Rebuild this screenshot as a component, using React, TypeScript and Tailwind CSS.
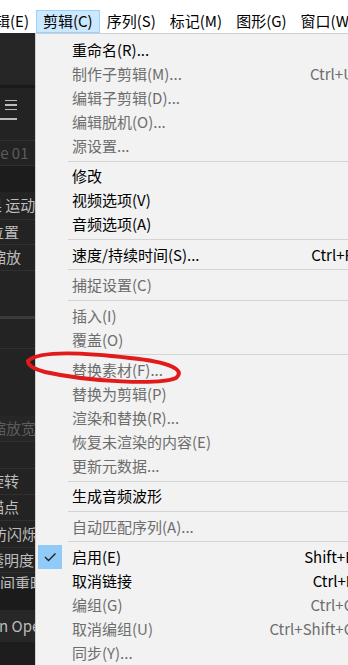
import React from 'react';

type Entry =
  | { kind: 'item'; label: string; shortcut?: string; disabled?: boolean; checked?: boolean }
  | { kind: 'sep' };

const it = (label: string, opts: { shortcut?: string; disabled?: boolean; checked?: boolean } = {}): Entry => ({
  kind: 'item',
  label,
  ...opts,
});
const sep: Entry = { kind: 'sep' };

const entries: Entry[] = [
  it('重命名(R)...'),
  it('制作子剪辑(M)...', { shortcut: 'Ctrl+U', disabled: true }),
  it('编辑子剪辑(D)...', { disabled: true }),
  it('编辑脱机(O)...', { disabled: true }),
  it('源设置...', { disabled: true }),
  sep,
  it('修改'),
  it('视频选项(V)'),
  it('音频选项(A)'),
  sep,
  it('速度/持续时间(S)...', { shortcut: 'Ctrl+R' }),
  sep,
  it('捕捉设置(C)', { disabled: true }),
  sep,
  it('插入(I)', { disabled: true }),
  it('覆盖(O)', { disabled: true }),
  sep,
  it('替换素材(F)...', { disabled: true }),
  it('替换为剪辑(P)', { disabled: true }),
  it('渲染和替换(R)...', { disabled: true }),
  it('恢复未渲染的内容(E)', { disabled: true }),
  it('更新元数据...', { disabled: true }),
  sep,
  it('生成音频波形'),
  sep,
  it('自动匹配序列(A)...', { disabled: true }),
  sep,
  it('启用(E)', { shortcut: 'Shift+E', checked: true }),
  it('取消链接', { shortcut: 'Ctrl+L' }),
  it('编组(G)', { shortcut: 'Ctrl+G', disabled: true }),
  it('取消编组(U)', { shortcut: 'Ctrl+Shift+G', disabled: true }),
  it('同步(Y)...', { disabled: true }),
];

const menuBar = ['编辑(E)', '剪辑(C)', '序列(S)', '标记(M)', '图形(G)', '窗口(W)'];

// rows of the dark panel on the left, only the right edge of it is visible
const PanelLabel = ({ text, offset, dim }: { text: string; offset: string; dim?: boolean }) => (
  <div className={`h-full flex items-center whitespace-nowrap ${offset} ${dim ? 'text-[#5c5c5c]' : 'text-[#bdbdbd]'}`}>
    {text}
  </div>
);

const DarkPanel = () => (
  <div className="w-[35px] shrink-0 overflow-hidden bg-[#232323] flex flex-col text-[15px]">
    <div className="h-[52px] bg-[#262626]" />
    <div className="h-[3px] bg-[#1a1a1a]" />
    <div className="h-[52px] flex flex-col">
      <div className="h-[24px] flex items-end pl-[5px] pb-[2px]">
        <div className="flex flex-col gap-[3px] w-[12px]">
          <div className="h-[1.5px] bg-[#bdbdbd]" />
          <div className="h-[1.5px] bg-[#bdbdbd]" />
          <div className="h-[1.5px] bg-[#bdbdbd]" />
        </div>
      </div>
      <div className="h-[6px]" />
      <div className="h-[2px] w-[17px] bg-[#bcbcbc]" />
    </div>
    <div className="h-[1px] bg-[#303030]" />
    <div className="h-[24px]">
      <PanelLabel text="ne 01" offset="ml-[-9px]" dim />
    </div>
    <div className="h-[1px] bg-[#303030]" />
    <div className="h-[26px] bg-[#1c1c1c]" />
    <div className="h-[28px] border-b border-[#303030]">
      <PanelLabel text="果 运动" offset="ml-[-13px]" />
    </div>
    <div className="h-[25px] border-b border-[#303030]">
      <PanelLabel text="位置" offset="ml-[-11px]" />
    </div>
    <div className="h-[26px] border-b border-[#303030]">
      <PanelLabel text="缩放" offset="ml-[-9px]" />
    </div>
    <div className="h-[45px]" />
    <div className="h-[3px] bg-[#3b3b3b]" />
    <div className="h-[30px] border-b border-[#303030]" />
    <div className="h-[67px]" />
    <div className="h-[26px] bg-[#262626] border-b border-[#303030]">
      <PanelLabel text="缩放宽度" offset="ml-[-9px]" dim />
    </div>
    <div className="h-[27px] border-b border-[#303030]" />
    <div className="h-[26px] border-b border-[#303030]">
      <PanelLabel text="旋转" offset="ml-[-11px]" />
    </div>
    <div className="h-[26px] border-b border-[#303030]">
      <PanelLabel text="锚点" offset="ml-[-11px]" />
    </div>
    <div className="h-[27px] border-b border-[#303030]">
      <PanelLabel text="防闪烁" offset="ml-[-8px]" />
    </div>
    <div className="h-[25px] border-b border-[#303030]">
      <PanelLabel text="透明度" offset="ml-[-11px]" />
    </div>
    <div className="h-[16px] overflow-hidden">
      <div className="h-[24px] mt-[-2px]">
        <PanelLabel text="间重映射" offset="ml-[0px]" />
      </div>
    </div>
    <div className="h-[21px] bg-[#1b1b1b]" />
    <div className="h-[32px] bg-[#272727]">
      <PanelLabel text="n Open" offset="ml-[-1px]" />
    </div>
    <div className="flex-1 bg-[#1d1d1d]" />
  </div>
);

const Check = () => (
  <svg width="24" height="24" viewBox="0 0 24 24">
    <polyline points="7,12 10.5,15.5 17.5,8.5" fill="none" stroke="#1c1c1c" strokeWidth="1.3" />
  </svg>
);

const Menu = () => (
  <div className="w-[360px] shrink-0 bg-[#f2f2f2] border-l border-t border-[#cfcfcf] pt-[4px] flex flex-col">
    {entries.map((e, i) =>
      e.kind === 'sep' ? (
        <div key={i} className="h-[7px] flex items-center pl-[32px]">
          <div className="h-[1px] w-full bg-[#d4d4d4]" />
        </div>
      ) : (
        <div
          key={i}
          className={`h-[24px] flex items-center pl-[2px] pr-[41px] whitespace-nowrap ${
            e.disabled ? 'text-[#6d6d6d]' : 'text-black'
          }`}
        >
          <div className={`w-[24px] h-[24px] shrink-0 ${e.checked ? 'bg-[#91c9f7]' : ''}`}>{e.checked && <Check />}</div>
          <div className="ml-[10px] flex-1 leading-[24px]">{e.label}</div>
          {e.shortcut && <div className="leading-[24px]">{e.shortcut}</div>}
        </div>
      ),
    )}
  </div>
);

export default function App() {
  return (
    <div className="w-[348px] h-[665px] overflow-hidden bg-white relative text-[15px] font-['Noto_Sans_CJK_SC',sans-serif]">
      <div className="h-[10px] bg-white" />
      <div className="h-[23px] flex items-stretch whitespace-nowrap text-black ml-[-27px]">
        {menuBar.map((m) => (
          <div
            key={m}
            className={`px-[6px] flex items-center border ${
              m === '剪辑(C)' ? 'bg-[#cce8ff] border-[#99d1ff]' : 'border-transparent'
            }`}
          >
            {m}
          </div>
        ))}
      </div>
      <div className="flex h-[632px]">
        <DarkPanel />
        <Menu />
      </div>
      <svg className="absolute left-0 top-0 pointer-events-none" width="348" height="665">
        <path
          d="M 28 361 C 38 351, 80 352, 130 358 C 170 362, 186 370, 176 378 C 160 385, 90 382, 45 372 C 34 369, 28 365, 28 361 Z"
          fill="none"
          stroke="#e11b1b"
          strokeWidth="4"
          strokeLinejoin="round"
        />
      </svg>
    </div>
  );
}
